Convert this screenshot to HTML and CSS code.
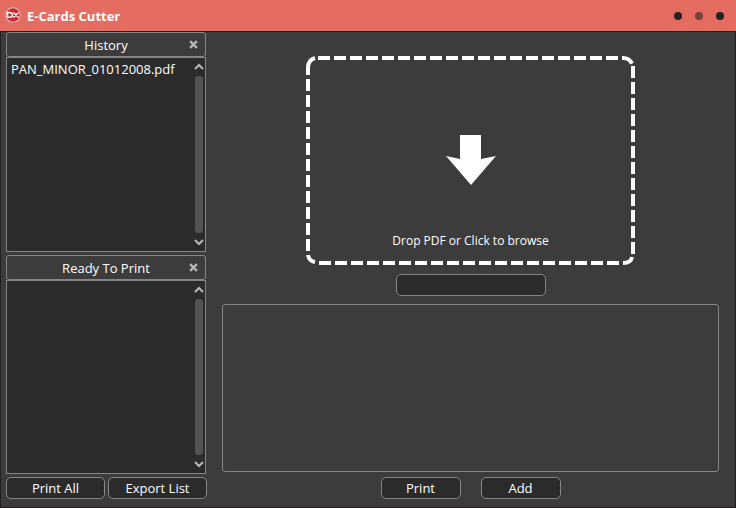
FILE: index.html
```html
<!DOCTYPE html>
<html lang="en">
<head>
<meta charset="utf-8">
<title>E-Cards Cutter</title>
<link rel="stylesheet" href="styles.css">
</head>
<body>
<header class="titlebar">
  <svg class="logo" viewBox="0 0 16 18" aria-hidden="true">
    <path d="M8 17.500L4 14H12Z" fill="#8f7f80"/>
    <circle cx="8" cy="8" r="7.700" fill="#d3c3c3"/>
    <circle cx="8" cy="8" r="6.700" fill="#d9202c"/>
    <path d="M2.500 5.500V10.300H4.500Q7.500 10.300 7.500 8T4.500 5.500ZM8.500 5.500L13.500 10.500M13.500 5.500L8.500 10.500" fill="none" stroke="#fff" stroke-width="1.500"/>
  </svg>
  <h1>E-Cards Cutter</h1>
  <div class="window-controls">
    <button class="dot" aria-label="Minimize"></button>
    <button class="dot dim" aria-label="Maximize" disabled></button>
    <button class="dot" aria-label="Close"></button>
  </div>
</header>
<main class="workspace">
  <aside class="sidebar">
    <section class="panel">
      <div class="panel-head">
        <h2>History</h2>
        <button class="clear" aria-label="Clear history"><svg viewBox="0 0 8 8"><path d="M1 1L7 7M7 1L1 7"/></svg></button>
      </div>
      <div class="list">
        <ul><li>PAN_MINOR_01012008.pdf</li></ul>
        <div class="scrollbar">
          <svg viewBox="0 0 10 6"><path d="M1 5L5 1L9 5"/></svg>
          <div class="thumb"></div>
          <svg viewBox="0 0 10 6"><path d="M1 1L5 5L9 1"/></svg>
        </div>
      </div>
    </section>
    <section class="panel">
      <div class="panel-head">
        <h2>Ready To Print</h2>
        <button class="clear" aria-label="Clear print list"><svg viewBox="0 0 8 8"><path d="M1 1L7 7M7 1L1 7"/></svg></button>
      </div>
      <div class="list">
        <ul></ul>
        <div class="scrollbar">
          <svg viewBox="0 0 10 6"><path d="M1 5L5 1L9 5"/></svg>
          <div class="thumb"></div>
          <svg viewBox="0 0 10 6"><path d="M1 1L5 5L9 1"/></svg>
        </div>
      </div>
    </section>
    <div class="side-actions">
      <button class="btn">Print All</button>
      <button class="btn">Export List</button>
    </div>
  </aside>
  <section class="content">
    <button class="dropzone">
      <svg class="frame" viewBox="0 0 329 209" aria-hidden="true">
        <path d="M2 19V12Q2 4 9 2"/>
        <path d="M12 2H317A10 10 0 0 1 327 12" stroke-dasharray="12 4"/>
        <path d="M327 10V198" stroke-dasharray="12 4"/>
        <path d="M326 201Q325 207 317 207"/>
        <path d="M313 207H12" stroke-dasharray="12 4"/>
        <path d="M9 206Q3 205 2 199"/>
        <path d="M2 23V196" stroke-dasharray="12 4"/>
      </svg>
      <svg class="arrow" viewBox="0 0 50 50" aria-hidden="true"><path d="M14 0H35V24L50 21L25 50L0 21L14 24Z"/></svg>
      <span>Drop PDF or Click to browse</span>
    </button>
    <input class="field" type="text" aria-label="Password">
    <div class="preview"></div>
    <div class="actions">
      <button class="btn">Print</button>
      <button class="btn">Add</button>
    </div>
  </section>
</main>
</body>
</html>
```

FILE: styles.css
```css
* { box-sizing: border-box; }
body {
  margin: 0;
  min-height: 100vh;
  display: flex;
  flex-direction: column;
  background: #3c3c3c;
  color: #fff;
  font: 13px/18px "Open Sans", sans-serif;
}
button, input { font: inherit; color: inherit; }
button { padding: 0; border: 0; background: none; }
h1, h2, ul { margin: 0; padding: 0; list-style: none; }
.titlebar {
  height: 32px;
  flex: none;
  display: flex;
  align-items: center;
  gap: 6px;
  padding: 0 12px 0 5px;
  background: #e46c61;
  border-bottom: 1px solid #231f20;
}
.logo { width: 16px; height: 18px; }
h1 { flex: 1; font-size: 13px; font-weight: 700; }
.window-controls { display: flex; gap: 13px; }
.dot { width: 8px; height: 8px; border-radius: 50%; background: #242424; }
.dim { background: #76423d; }
.workspace {
  flex: 1;
  display: flex;
  gap: 15px;
  padding: 0 16px 8px 5px;
  border: 1px solid #231f20;
  border-top: 0;
}
.sidebar { width: 201px; flex: none; display: flex; flex-direction: column; gap: 3px; }
.panel { flex: 1; width: 200px; display: flex; flex-direction: column; }
.panel-head {
  position: relative;
  height: 25px;
  border: 1px solid #868686;
  border-radius: 3px;
  text-align: center;
}
h2 { font-size: 13px; font-weight: 400; line-height: 24px; }
.clear { position: absolute; right: 7px; top: 7px; width: 9px; height: 9px; }
.clear svg { display: block; fill: none; stroke: #b8b8b8; stroke-width: 2; }
.list {
  flex: 1;
  display: flex;
  justify-content: space-between;
  border: 1px solid #868686;
  background: #2b2b2b;
}
.list ul { padding: 2px 4px; }
.scrollbar {
  width: 12px;
  display: flex;
  flex-direction: column;
  align-items: center;
  gap: 6px;
  padding: 6px 0;
}
.scrollbar svg { width: 10px; height: 6px; overflow: visible; fill: none; stroke: #b8b8b8; stroke-width: 2; }
.thumb { flex: 1; width: 8px; border-radius: 3px; background: #535353; }
.btn, .field { height: 22px; border: 1px solid #868686; border-radius: 5px; background: #2b2b2b; }
.side-actions { display: flex; gap: 3px; }
.side-actions .btn { flex: 1; }
.content { flex: 1; display: flex; flex-direction: column; align-items: center; padding-top: 24px; }
.dropzone {
  position: relative;
  width: 329px;
  height: 209px;
  display: flex;
  flex-direction: column;
  align-items: center;
  justify-content: flex-end;
  gap: 47px;
  padding-bottom: 15px;
  font-size: 12px;
}
.frame { position: absolute; inset: 0; fill: none; stroke: #fff; stroke-width: 4; }
.arrow { width: 50px; height: 50px; fill: #fff; }
.field { width: 150px; margin: 9px 0 8px; }
.preview { flex: 1; width: 100%; border: 1px solid #868686; border-radius: 3px; }
.actions { display: flex; gap: 20px; margin-top: 5px; }
.actions .btn { width: 80px; }
```
